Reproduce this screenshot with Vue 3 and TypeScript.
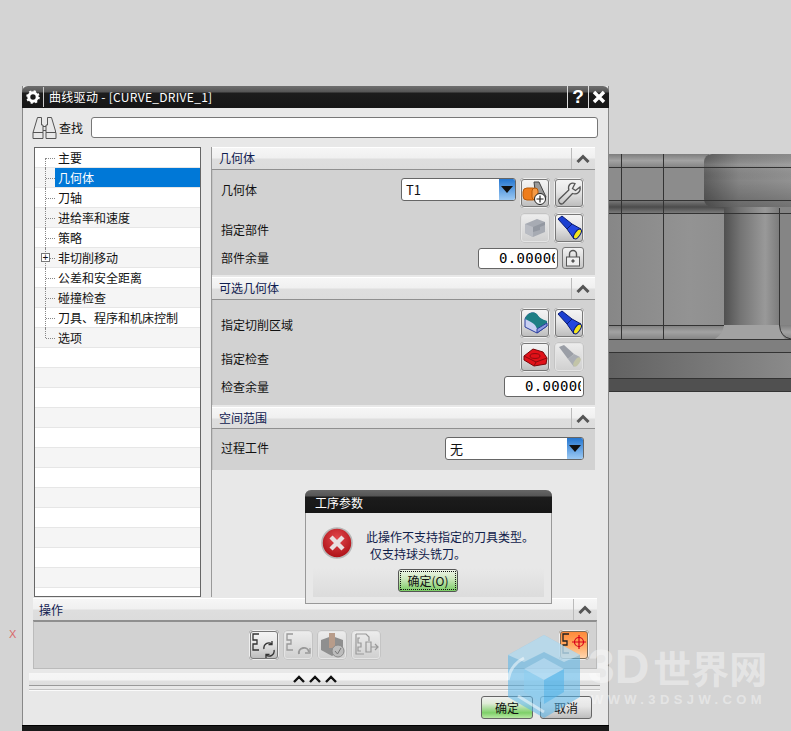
<template>
  <div class="desktop">
    <!-- part in the graphics window behind the dialog -->
    <svg class="model" width="182" height="238" viewBox="609 154 182 238">
      <defs>
        <linearGradient id="band" x1="0" y1="0" x2="0" y2="1">
          <stop offset="0" stop-color="#7e7e7e" />
          <stop offset="0.5" stop-color="#a2a2a2" />
          <stop offset="1" stop-color="#868686" />
        </linearGradient>
        <linearGradient id="slot" x1="0" y1="0" x2="0" y2="1">
          <stop offset="0" stop-color="#777" />
          <stop offset="0.5" stop-color="#4c4c4c" />
          <stop offset="1" stop-color="#7a7a7a" />
        </linearGradient>
        <linearGradient id="wall" x1="0" y1="0" x2="1" y2="0">
          <stop offset="0" stop-color="#878787" />
          <stop offset="0.7" stop-color="#939393" />
          <stop offset="1" stop-color="#8f8f8f" />
        </linearGradient>
        <linearGradient id="neck" x1="0" y1="0" x2="1" y2="0">
          <stop offset="0" stop-color="#505050" />
          <stop offset="0.3" stop-color="#747474" />
          <stop offset="0.75" stop-color="#999" />
          <stop offset="1" stop-color="#7c7c7c" />
        </linearGradient>
        <linearGradient id="head" x1="0" y1="0" x2="1" y2="0">
          <stop offset="0" stop-color="#5e5e5e" />
          <stop offset="0.35" stop-color="#858585" />
          <stop offset="1" stop-color="#959595" />
        </linearGradient>
        <linearGradient id="headtop" x1="0" y1="0" x2="0" y2="1">
          <stop offset="0" stop-color="#000" stop-opacity="0.05" />
          <stop offset="0.2" stop-color="#fff" stop-opacity="0.12" />
          <stop offset="0.5" stop-color="#000" stop-opacity="0" />
          <stop offset="1" stop-color="#000" stop-opacity="0.22" />
        </linearGradient>
        <linearGradient id="face" x1="0" y1="0" x2="1" y2="0">
          <stop offset="0" stop-color="#626262" />
          <stop offset="1" stop-color="#8a8a8a" />
        </linearGradient>
      </defs>
      <rect x="609" y="154" width="100" height="13" fill="url(#band)" />
      <rect x="609" y="167" width="100" height="34" fill="#8c8c8c" />
      <rect x="609" y="201" width="118" height="12" fill="url(#slot)" />
      <rect x="609" y="213" width="115" height="112" fill="url(#wall)" />
      <rect x="609" y="325" width="182" height="14" fill="url(#band)" />
      <rect x="724" y="207" width="55" height="118" fill="url(#neck)" />
      <path d="M724 325 Q723 334 715 339 H785 Q780 334 779 325 Z" fill="#a2a2a2" />
      <rect x="779" y="207" width="12" height="118" fill="#858585" />
      <rect x="704" y="154" width="100" height="53" rx="8" fill="url(#head)" />
      <rect x="704" y="154" width="100" height="53" rx="8" fill="url(#headtop)" />
      <rect x="609" y="339" width="182" height="13" fill="#7f7f7f" />
      <rect x="609" y="352" width="182" height="26" fill="url(#face)" />
      <rect x="609" y="378" width="182" height="13" fill="#505050" />
      <g stroke="#333" stroke-width="1" fill="none">
        <path d="M609 167.5 H791 M609 200.5 H791 M609 213.5 H791 M609 325.5 H724" />
        <path d="M779 325.5 H780 M609 339.5 H791 M609 352.5 H791 M609 378.5 H791 M609 391.5 H791" />
        <path d="M621.5 154 V339 M663.5 154 V339 M779.5 208 V325 Q780 337 791 339" />
      </g>
    </svg>

    <span class="axis">X</span>

    <section class="dialog">
      <header class="titlebar">
        <svg class="gear" width="14" height="14" viewBox="0 0 14 14">
          <circle cx="7" cy="7" r="4.2" fill="none" stroke="#fff" stroke-width="3" />
          <circle cx="7" cy="7" r="5.8" fill="none" stroke="#fff" stroke-width="2" stroke-dasharray="2.2 2.35" />
        </svg>
        <span class="title">曲线驱动 - [CURVE_DRIVE_1]</span>
        <span class="capbtn help">?</span>
        <span class="capbtn close">
          <svg width="14" height="14" viewBox="0 0 14 14">
            <path d="M2 2 L12 12 M12 2 L2 12" stroke="#fff" stroke-width="3.4" />
          </svg>
        </span>
      </header>

      <div class="search">
        <svg width="25" height="24" viewBox="0 0 25 24" fill="none" stroke="#555" stroke-width="1">
          <path d="M5.5 1.5 H9.5 V9 H11 V16.5 H1 L1.5 15 Z M15.5 1.5 H19.5 L23.5 15 V16.5 H14 V9 H15.5 Z" />
          <path d="M1 16.5 H11 V22.5 H1 Z M14 16.5 H24 V22.5 H14 Z M11 10.5 H14 M11 14.5 H14" />
        </svg>
        <span class="search-label">查找</span>
        <div class="search-input"></div>
      </div>

      <div class="main">
        <ul class="tree">
          <li
            v-for="(row, i) in treeRows"
            :key="i"
            :class="['tree-row', { alt: i % 2 === 1, on: i === 1, branch: row && i < 10, last: i === 9, first: i === 0 }]"
          >
            <span v-if="i === 5" class="plus">+</span>
            <span v-if="row" class="tree-text">{{ row }}</span>
          </li>
        </ul>

        <div class="panels">
          <div class="sec-head">
            <span>几何体</span>
            <span class="collapse"><svg width="14" height="9" viewBox="0 0 14 9"><path d="M1.5 8 L7 2.5 L12.5 8" fill="none" stroke="#555" stroke-width="3" /></svg></span>
          </div>
          <div class="sec-body geo">
            <div class="row r-geo">
              <span>几何体</span>
              <div class="combo geo-combo"><span>T1</span><i class="arrow"></i></div>
              <button class="tool">
                <svg width="26" height="26" viewBox="0 0 26 26">
                  <path d="M12 2 L17 2 L24 17 L20 22 L14 18 Z" fill="#9a9a9a" stroke="#444" />
                  <rect x="1" y="8" width="14" height="12" rx="4" fill="#ee7d1c" stroke="#b85a08" />
                  <rect x="10" y="8" width="6" height="12" rx="3" fill="#f59a45" stroke="#b85a08" />
                  <circle cx="18" cy="19" r="5.5" fill="#fff" stroke="#222" />
                  <path d="M18 15.5 V22.5 M14.5 19 H21.5" stroke="#222" stroke-width="1.2" />
                </svg>
              </button>
              <button class="tool">
                <svg width="26" height="26" viewBox="0 0 26 26">
                  <path d="M24 7 L19.5 10.5 L16.5 8.5 L19 3.5 C15 2 11.5 5 12.8 10 L3 19.5 C1.5 22 4.5 25 7 23.5 L16.5 13.5 C21.5 15 25 11.5 24 7 Z" fill="none" stroke="#555" stroke-width="1.3" />
                </svg>
              </button>
            </div>
            <div class="row tools r-part">
              <span>指定部件</span>
              <button class="tool off">
                <svg width="24" height="22" viewBox="0 0 24 22">
                  <path d="M2 7 L14 2 L22 5 V15 L10 20 L2 16 Z" fill="#a7abb3" />
                  <path d="M2 7 L10 10 V20 L2 16 Z" fill="#b9bcc3" />
                  <path d="M10 10 L22 5 V8 L17 10 V13 L10 15 Z" fill="#9398a1" />
                </svg>
              </button>
              <button class="tool">
                <svg width="26" height="26" viewBox="0 0 26 26">
                  <path d="M2 4 L6 1 L16 9 L11 14 Z" fill="#1b3fd0" stroke="#0a1c74" />
                  <path d="M11 14 L16 9 L25 14 L18 24 Z" fill="#2447e0" stroke="#0a1c74" />
                  <ellipse cx="21.5" cy="19" rx="2.6" ry="5.6" transform="rotate(35 21.5 19)" fill="#f3e51e" stroke="#0a1c74" />
                </svg>
              </button>
            </div>
            <div class="row r-stock">
              <span>部件余量</span>
              <div class="num"><span>0.00000</span></div>
              <button class="lock">
                <svg width="16" height="18" viewBox="0 0 16 18" fill="none" stroke="#555">
                  <path d="M4.5 8 V5 A3.5 3.5 0 0 1 11.5 5 V8" stroke-width="1.4" />
                  <rect x="1.5" y="8" width="13" height="9" fill="#eee" />
                  <circle cx="8" cy="12" r="1.2" fill="#555" />
                </svg>
              </button>
            </div>
          </div>

          <div class="sec-head gap">
            <span>可选几何体</span>
            <span class="collapse"><svg width="14" height="9" viewBox="0 0 14 9"><path d="M1.5 8 L7 2.5 L12.5 8" fill="none" stroke="#555" stroke-width="3" /></svg></span>
          </div>
          <div class="sec-body opt">
            <div class="row tools">
              <span>指定切削区域</span>
              <button class="tool">
                <svg width="26" height="26" viewBox="0 0 26 26">
                  <path d="M3 9 C5 3 12 1 15 5 C17 9 20 10 24 12 L25 16 L15 23 L3 17 Z" fill="#c9d0f2" stroke="#2c3f9e" />
                  <path d="M3 9 C5 2 12 1 15 4 C17 8 20 9 25 11 L25 13 L15 19 C13 13 9 12 3 9 Z" fill="#1f7f85" />
                  <path d="M15 19 L25 13 L25 16 L15 23 Z" fill="#8f9de0" stroke="#2c3f9e" />
                </svg>
              </button>
              <button class="tool">
                <svg width="26" height="26" viewBox="0 0 26 26">
                  <path d="M2 4 L6 1 L16 9 L11 14 Z" fill="#1b3fd0" stroke="#0a1c74" />
                  <path d="M11 14 L16 9 L25 14 L18 24 Z" fill="#2447e0" stroke="#0a1c74" />
                  <ellipse cx="21.5" cy="19" rx="2.6" ry="5.6" transform="rotate(35 21.5 19)" fill="#f3e51e" stroke="#0a1c74" />
                </svg>
              </button>
            </div>
            <div class="row tools r-check">
              <span>指定检查</span>
              <button class="tool">
                <svg width="26" height="26" viewBox="0 0 26 26">
                  <path d="M2 12 L11 5 L21 8 L25 14 L24 20 L12 22 L2 16 Z" fill="#e11119" stroke="#7a0508" />
                  <path d="M2 12 L14 18 L25 14 M14 18 L12 22" fill="none" stroke="#8c0a0e" />
                  <ellipse cx="13" cy="12" rx="5" ry="2.4" fill="none" stroke="#8c0a0e" />
                </svg>
              </button>
              <button class="tool off">
                <svg width="26" height="26" viewBox="0 0 26 26">
                  <path d="M3 3 L8 1 L18 10 L12 15 Z" fill="#9a9ea6" />
                  <path d="M12 15 L18 10 L24 13 L18 23 Z" fill="#a9adb4" />
                  <ellipse cx="21" cy="18" rx="2.6" ry="5.2" transform="rotate(35 21 18)" fill="#c2c4a8" />
                </svg>
              </button>
            </div>
            <div class="row r-stock2">
              <span>检查余量</span>
              <div class="num"><span>0.00000</span></div>
            </div>
          </div>

          <div class="sec-head gap tight">
            <span>空间范围</span>
            <span class="collapse"><svg width="14" height="9" viewBox="0 0 14 9"><path d="M1.5 8 L7 2.5 L12.5 8" fill="none" stroke="#555" stroke-width="3" /></svg></span>
          </div>
          <div class="sec-body ipw">
            <div class="row r-ipw">
              <span>过程工件</span>
              <div class="combo ipw-combo"><span>无</span><i class="arrow"></i></div>
            </div>
          </div>
        </div>
      </div>

      <div class="ops">
        <div class="sec-head ops-head">
          <span>操作</span>
          <span class="collapse"><svg width="14" height="9" viewBox="0 0 14 9"><path d="M1.5 8 L7 2.5 L12.5 8" fill="none" stroke="#555" stroke-width="3" /></svg></span>
        </div>
        <div class="ops-body">
          <button class="tool">
            <svg width="26" height="26" viewBox="0 0 26 26" fill="none" stroke="#333" stroke-width="1.3">
              <path d="M8 2 H2 V8 H6 V12 H2 V18 H8" />
              <path d="M13 17 A5 5 0 0 1 21 12 M23 18 A5 5 0 0 1 15 23" />
              <path d="M21 9 V12.5 H17.5 M15 26 V22.5 H18.5" />
            </svg>
          </button>
          <button class="tool off">
            <svg width="26" height="26" viewBox="0 0 26 26" fill="none" stroke="#999" stroke-width="1.3">
              <path d="M8 2 H2 V8 H6 V12 H2 V18 H8" />
              <path d="M14 22 A5 5 0 0 1 24 20" stroke-width="2" />
              <path d="M25 16 V21 H20" />
            </svg>
          </button>
          <button class="tool off">
            <svg width="26" height="26" viewBox="0 0 26 26">
              <path d="M2 8 L13 4 L24 8 V18 L13 24 L2 18 Z" fill="#8f8f8f" />
              <rect x="10" y="1" width="6" height="15" fill="#b89c8a" />
              <circle cx="19" cy="19" r="6" fill="#bcbcbc" stroke="#8a8a8a" />
              <path d="M16 19 L18.5 22 L22 16" fill="none" stroke="#777" />
            </svg>
          </button>
          <button class="tool off">
            <svg width="26" height="26" viewBox="0 0 26 26" fill="none" stroke="#999" stroke-width="1.2">
              <path d="M3 2 H13 L16 5 V9 M3 2 V22 H11" />
              <path d="M7 6 H5 V11 H8 V15 H5 V19 H8" />
              <path d="M13 10 H18 V20 H13 Z M18 15 H25 M22 12 L25 15 L22 18" />
            </svg>
          </button>
          <button class="tool hot">
            <svg width="26" height="26" viewBox="0 0 26 26" fill="none">
              <path d="M8 2 H2 V9 H6 V13 H2 V21 H8" stroke="#222" stroke-width="1.3" />
              <circle cx="18" cy="10" r="4.5" stroke="#d8001a" stroke-width="1.2" />
              <path d="M18 3 V17 M11 10 H25" stroke="#d8001a" stroke-width="1.2" />
            </svg>
          </button>
        </div>
      </div>

      <div class="more">
        <svg width="44" height="9" viewBox="0 0 44 9" fill="none" stroke="#111" stroke-width="2.4">
          <path d="M1 8 L6 3 L11 8 M17 8 L22 3 L27 8 M33 8 L38 3 L43 8" />
        </svg>
      </div>
      <div class="rule"></div>

      <footer class="actions">
        <button class="act ok">确定</button>
        <button class="act">取消</button>
      </footer>
    </section>

    <section class="alert">
      <header class="alert-title">工序参数</header>
      <div class="alert-msg">
        <svg width="32" height="32" viewBox="0 0 32 32">
          <defs>
            <radialGradient id="err" cx="0.5" cy="0.35" r="0.7">
              <stop offset="0" stop-color="#e2484d" />
              <stop offset="1" stop-color="#a90c12" />
            </radialGradient>
          </defs>
          <circle cx="16" cy="16" r="15" fill="url(#err)" stroke="#b8b8b8" stroke-width="1.6" />
          <path d="M10 10 L22 22 M22 10 L10 22" stroke="#e8e0e0" stroke-width="4.4" />
        </svg>
        <p>此操作不支持指定的刀具类型。<br /><span>仅支持球头铣刀。</span></p>
      </div>
      <div class="alert-foot"><button class="alert-ok">确定(O)</button></div>
    </section>

    <!-- site watermark -->
    <svg class="mark-logo" width="76" height="86" viewBox="0 0 76 86">
      <path d="M38 1 L74 21 V63 L38 84 L2 63 V21 Z" fill="#55b4ea" fill-opacity="0.55" />
      <path d="M38 1 L74 21 L58 28 L38 18 L18 28 L2 21 Z" fill="#d4e6f0" fill-opacity="0.6" />
      <path d="M38 24 L58 35 L38 46 L18 35 Z" fill="#c7e4f5" fill-opacity="0.55" />
      <path d="M38 46 V70 L18 58 V35 Z" fill="#8ccdf0" fill-opacity="0.5" />
      <path d="M38 46 V70 L58 58 V35 Z" fill="#4eb2ea" fill-opacity="0.55" />
      <path d="M2 46 C4 34 10 28 18 24 M12 62 L38 78" fill="none" stroke="#fff" stroke-opacity="0.5" stroke-width="3" />
    </svg>
    <div class="mark-name"><span>3D</span>世界网</div>
    <div class="mark-url">WWW.3DSJW.COM</div>
  </div>
</template>

<script setup lang="ts">
const items = ['主要', '几何体', '刀轴', '进给率和速度', '策略', '非切削移动', '公差和安全距离', '碰撞检查', '刀具、程序和机床控制', '选项']
const treeRows: string[] = [...items, ...Array<string>(13).fill('')]
</script>

<style>
html, body { margin: 0; background: #d4d4d4; }
</style>

<style scoped>
.desktop {
  position: relative; width: 791px; height: 731px; overflow: hidden;
  background: #d4d4d4; color: #111;
  font: 12px/16px "Noto Sans CJK SC", "Liberation Sans", sans-serif;
}
.model { position: absolute; left: 609px; top: 154px; }
.axis { position: absolute; left: 9px; top: 627px; color: #d9686a; font: 11px/14px "Liberation Sans", sans-serif; }

.dialog {
  position: absolute; left: 22px; top: 86px; width: 587px; height: 645px;
  box-sizing: border-box; background: #e8e8e8;
  border-right: 1px solid #888; border-left: 1px solid #888;
  display: flex; flex-direction: column;
}
.titlebar {
  height: 22px; margin: 0 -1px; flex: none; display: flex; align-items: center;
  background: linear-gradient(#6f6f6f 0, #555 6px, #1c1c1c 7px, #161616 100%);
  border-radius: 6px 6px 0 0; color: #fff;
}
.gear { margin-left: 4px; }
.title { margin-left: 3px; padding-left: 5px; border-left: 1px solid #ccc; line-height: 20px; height: 20px; flex: 1; letter-spacing: 0.3px; }
.capbtn {
  width: 20px; height: 22px; border-left: 1px solid #ddd; display: flex; align-items: center; justify-content: center;
  font: bold 19px/22px "Liberation Sans", sans-serif; color: #fff;
}
.close { border-top-right-radius: 6px; }

.search { height: 39px; flex: none; display: flex; align-items: center; padding: 0 10px 0 9px; }
.search-label { margin-left: 2px; width: 32px; }
.search-input { flex: 1; height: 19px; background: #fff; border: 1px solid #777; border-radius: 3px; }

.main { display: flex; height: 451px; flex: none; padding-left: 11px; }
.tree {
  list-style: none; margin: 0; padding: 0; width: 167px; height: 450px; box-sizing: border-box;
  border: 1px solid #666; overflow: hidden; background: #fff; flex: none;
}
.tree-row {
  position: relative; height: 20px; box-sizing: border-box; padding-left: 20px;
  background: #fff; border-bottom: 1px solid #e6e6e6;
}
.tree-row.alt { background: #f5f5f5; }
.tree-text { display: block; height: 19px; line-height: 19px; padding-left: 3px; }
.tree-row.on .tree-text { background: #0078d7; color: #fff; }
.tree-row.branch::before {
  content: ""; position: absolute; left: 10px; top: 0; bottom: -1px;
  border-left: 1px dotted #888;
}
.tree-row.first::before { top: 10px; }
.tree-row.last::before { bottom: 9px; }
.tree-row.branch::after {
  content: ""; position: absolute; left: 11px; top: 10px; width: 9px;
  border-top: 1px dotted #888;
}
.plus {
  position: absolute; z-index: 1; left: 6px; top: 5px; width: 7px; height: 7px; border: 1px solid #777;
  background: #fff; font: 10px/7px "Liberation Sans", sans-serif; text-align: center;
}

.panels { width: 384px; margin-left: 10px; flex: none; border-left: 1px solid #999; height: 450px; box-sizing: border-box; }
.sec-head {
  position: relative; height: 23px; box-sizing: border-box; padding-left: 7px; line-height: 19px; color: #102050;
  background: linear-gradient(#f6f6f6 0, #f0f0f0 10px, #dedede 11px, #dcdcdc 100%);
  border-bottom: 1px solid #8f8f8f; border-top: 1px solid #fff;
}
.sec-head.gap { margin-top: 2px; }
.sec-head.tight { height: 22px; }
.collapse {
  position: absolute; right: 1px; top: 0; bottom: 0; width: 22px; border-left: 1px solid #bbb;
  display: flex; align-items: center; justify-content: center;
}
.sec-body { background: #d2d2d2; box-sizing: border-box; padding: 8px 11px 0 8px; border-left: 1px solid #c4c4c4; }
.sec-body.geo { height: 105px; }
.sec-body.opt { height: 105px; }
.sec-body.ipw { height: 41px; }
.row { display: flex; align-items: center; gap: 4px; }
.row > span { margin-right: auto; }
.r-geo { height: 31px; align-items: flex-start; }
.r-geo > span { line-height: 23px; }
.tools { height: 30px; }
.tools > span { padding-top: 4px; }
.r-part, .r-check { margin-top: 4px; }
.r-stock { height: 22px; margin-top: 4px; }
.r-stock2 { height: 21px; margin-top: 4px; }
.r-ipw > span { padding-bottom: 2px; }

.tool {
  width: 30px; height: 30px; padding: 0; flex: none; box-sizing: border-box;
  border: 2px solid #777; border-radius: 4px; outline: 1px solid #eee; outline-offset: -1px;
  background: linear-gradient(#f4f4f4, #e6e6e6 45%, #bdbdbd);
  display: flex; align-items: center; justify-content: center;
}
.tool.off { border-color: #e4e4e4; background: linear-gradient(#ececec, #dedede 50%, #d0d0d0); outline: 1px solid #c4c4c4; }
.tool.hot { background: linear-gradient(#ff8a3a, #ffa860 50%, #ffd6b0); border-color: #7d6a55; }

.combo {
  display: flex; box-sizing: border-box; height: 23px; background: #fff; border: 1px solid #666; border-radius: 3px;
  padding-left: 4px; line-height: 21px; overflow: hidden;
}
.combo span { flex: 1; font-size: 13px; }
.geo-combo { width: 115px; }
.ipw-combo { width: 139px; }
.arrow {
  width: 16px; background: linear-gradient(#2476d0, #9cc9f3); position: relative; flex: none;
}
.arrow::after {
  content: ""; position: absolute; left: 2px; top: 7px; border: 6px solid transparent; border-top: 7px solid #111; border-bottom: 0;
}
.num {
  box-sizing: border-box; width: 80px; height: 21px; background: #fff; border: 1px solid #666; border-radius: 3px;
  padding: 0 2px 0 20px;
  font: 14px/19px "DejaVu Sans Mono", monospace; color: #000;
}
.num span { display: block; overflow: hidden; white-space: nowrap; letter-spacing: 0.3px; }
.lock {
  width: 22px; height: 22px; padding: 0; box-sizing: border-box; border: 1px solid #777; border-radius: 3px;
  background: linear-gradient(#f2f2f2, #c6c6c6); display: flex; align-items: center; justify-content: center;
}

.ops { margin: 0 11px 0 10px; flex: none; }
.ops-head { height: 23px; padding-left: 6px; line-height: 22px; }
.ops-body {
  height: 48px; box-sizing: border-box; background: #d2d2d2; border: 1px solid #bbb; border-top-color: #8f8f8f;
  display: flex; align-items: center; gap: 4px; padding: 0 7px 0 215px;
}
.ops-body .hot { margin-left: auto; }

.more {
  height: 13px; margin: 4px 8px 0 6px; flex: none; display: flex; align-items: center; justify-content: center;
  background: linear-gradient(#f6f6f6 0, #f4f4f4 7px, #e0e0e0 8px, #dedede 100%);
  border-bottom: 1px solid #999; box-sizing: border-box;
}
.more svg { margin-top: -2px; }
.rule { height: 1px; margin: 3px 8px 0 6px; background: #c4c4c4; flex: none; border-bottom: 1px solid #fafafa; }

.actions { display: flex; justify-content: flex-end; gap: 7px; padding: 5px 16px 0 0; flex: none; height: 29px; box-sizing: content-box; }
.act {
  width: 52px; height: 23px; padding: 0; box-sizing: border-box; border: 1px solid #666; border-radius: 3px;
  background: linear-gradient(#f0f0f0, #e6e6e6 45%, #bdbdbd); font: inherit; color: #111;
}
.act.ok { background: linear-gradient(#f0f0f0, #e0ecd8 30%, #7ed069 75%, #b8e8a4); }

.dialog::after {
  content: ""; position: absolute; left: -1px; right: -1px; top: 639px; height: 6px;
  background: #1a1a1a; border-top: 1px solid #000; box-sizing: border-box;
}

.alert {
  position: absolute; left: 305px; top: 490px; width: 247px; height: 114px; box-sizing: border-box;
  background: #e8e8e8; border: 1px solid #999; border-top: 0; border-radius: 6px 6px 0 0;
}
.alert-title {
  height: 23px; margin: 0 -1px; padding-left: 10px; color: #fff; line-height: 26px;
  background: linear-gradient(#666 0, #555 6px, #1c1c1c 7px, #161616 100%); border-radius: 6px 6px 0 0;
}
.alert-msg { display: flex; height: 55px; padding: 14px 0 0 15px; box-sizing: border-box; color: #10204a; }
.alert-msg p { margin: 1px 0 0 13px; line-height: 17px; }
.alert-msg p span { padding-left: 4px; }
.alert-foot {
  margin: 0 7px; height: 29px; display: flex; padding: 1px 0 0 85px;
  background: linear-gradient(#e8e8e8, #dcdcdc); box-sizing: border-box;
}
.alert-ok {
  width: 60px; height: 23px; padding: 0; font: inherit; color: #111; box-sizing: border-box;
  border: 1px solid #555; border-radius: 3px; outline: 1px dotted #111; outline-offset: -3px;
  background: linear-gradient(#eef4e8, #cfe8bf 40%, #79cc63);
}

.mark-logo { position: absolute; left: 506px; top: 634px; }
.mark-name {
  position: absolute; left: 588px; top: 644px; white-space: nowrap;
  font: bold 38px/46px "Noto Sans CJK SC", "Liberation Sans", sans-serif; color: rgba(255, 255, 255, 0.4);
}
.mark-name span { font: bold 48px/46px "Liberation Sans", sans-serif; margin-right: 4px; }
.mark-url {
  position: absolute; left: 591px; top: 693px; white-space: nowrap; letter-spacing: 4.4px;
  font: bold 13px/14px "Liberation Sans", sans-serif; color: rgba(255, 255, 255, 0.4);
}
</style>
